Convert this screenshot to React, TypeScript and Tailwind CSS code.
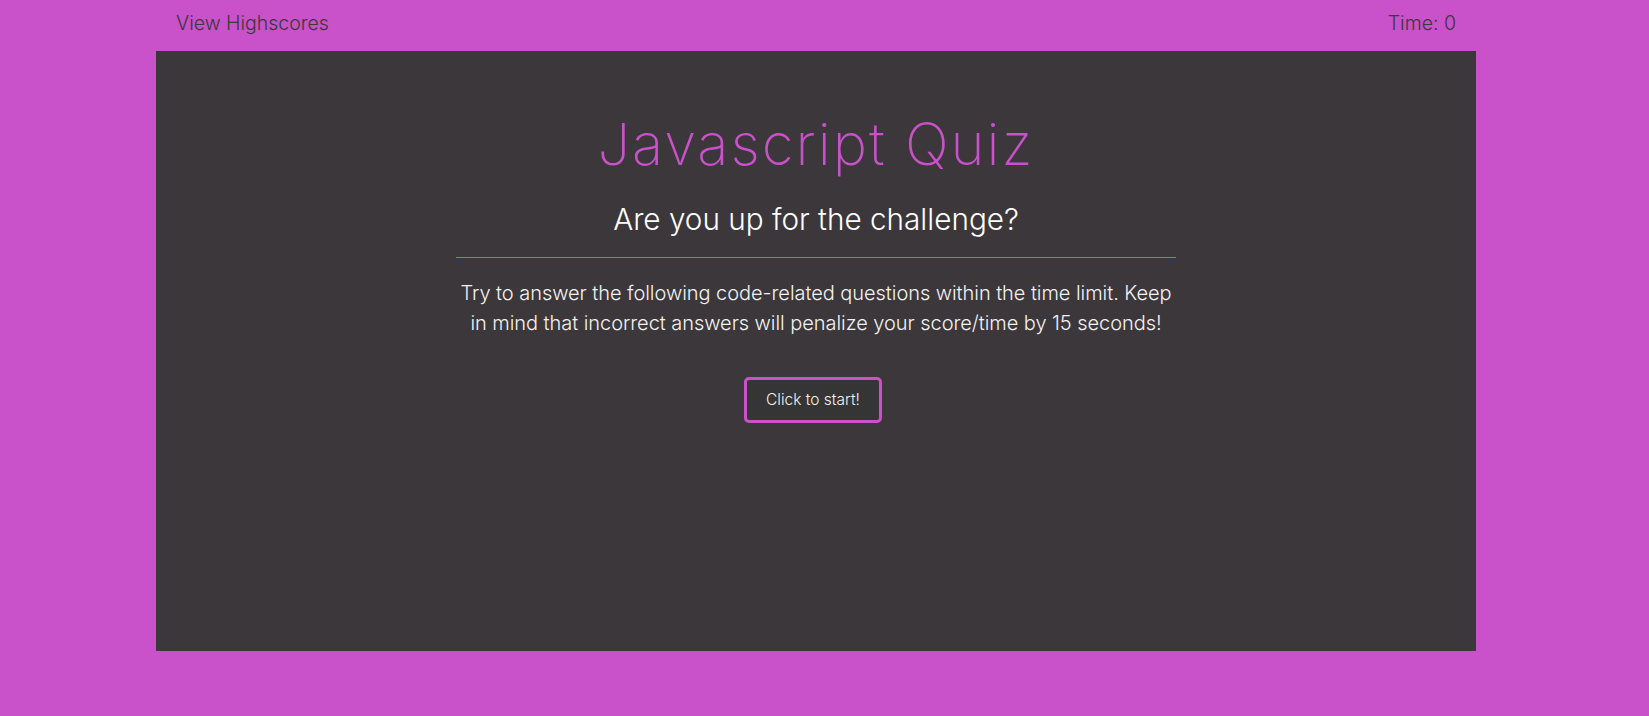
export default function App() {
  return (
    <div
      className="min-h-[716px] w-full bg-[#c951c9]"
      style={{ fontFamily: "Inter, 'Noto Sans', sans-serif" }}
    >
      <div className="ml-[156px] w-[1320px]">
        <header className="flex h-[51px] justify-between px-5 pt-[11px] text-[19.5px] font-light leading-[24px] text-[#3b373b]">
          <span>View Highscores</span>
          <span>Time: 0</span>
        </header>
        <main className="flex h-[600px] flex-col items-center bg-[#3b373b] pt-[64px]">
          <h1 className="text-[58px] font-extralight leading-[58px] tracking-[2px] text-[#c951c9]">
            Javascript Quiz
          </h1>
          <h2 className="mt-[28px] text-[29.7px] font-light leading-[36px] text-white">
            Are you up for the challenge?
          </h2>
          <div className="mt-[20px] h-px w-[720px] bg-[#c951c9]" />
          <p className="mt-[20px] w-[720px] text-center text-[20px] font-light leading-[30px] tracking-[-0.05px] text-[#f2f2f2]">
            Try to answer the following code-related questions within the time limit. Keep in mind
            that incorrect answers will penalize your score/time by 15 seconds!
          </p>
          <button className="mt-[39px] mr-[6px] h-[46px] w-[138px] rounded-[5px] border-[3px] border-[#c951c9] bg-[#353535] text-[15.5px] font-light text-[#f2f2f2]">
            Click to start!
          </button>
        </main>
      </div>
    </div>
  );
}
